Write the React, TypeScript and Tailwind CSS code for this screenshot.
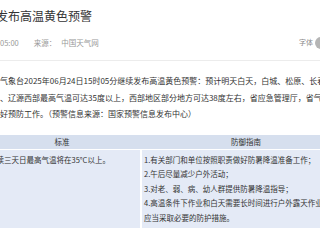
const lines = [
  '气象台2025年06月24日15时05分继续发布高温黄色预警：预计明天白天，白城、松原、长春、四平',
  '、辽源西部最高气温可达35度以上，西部地区部分地方可达38度左右，省应急管理厅，省气象局',
  '好预防工作。（预警信息来源：国家预警信息发布中心）',
];

const guide = [
  '1.有关部门和单位按照职责做好防暑降温准备工作；',
  '2.午后尽量减少户外活动；',
  '3.对老、弱、病、幼人群提供防暑降温指导；',
  '4.高温条件下作业和白天需要长时间进行户外露天作业的人员',
  '应当采取必要的防护措施。',
];

export default function App() {
  return (
    <div className="w-[320px] h-[240px] overflow-hidden bg-white font-['Noto_Sans_CJK_SC','Noto_Sans',sans-serif] text-[#333]">
      {/* Title */}
      <div className="pt-[7px] -ml-[4px] h-[25px] text-[12px] leading-[18px] whitespace-nowrap">发布高温黄色预警</div>

      {/* Meta */}
      <div className="flex items-center justify-between h-[36px] border-b border-[#ececec]">
        <div className="flex items-center text-[7.5px] text-[#999] whitespace-nowrap">
          <span>05:00</span>
          <span className="ml-[15px]">来源：</span>
          <span className="ml-[5px]">中国天气网</span>
        </div>
        <div className="flex items-center gap-[2px] -mr-[7px] text-[7px] text-[#888]">
          <span>字体</span>
          <span className="w-[12px] h-[12px] rounded-full bg-[#b5b5b5]" />
        </div>
      </div>

      {/* Body text */}
      <div className="mt-[12px] text-[8px] leading-[16.5px] whitespace-nowrap">
        {lines.map((l) => (
          <div key={l}>{l}</div>
        ))}
      </div>

      {/* Table */}
      <div className="mt-[12px] -ml-[16px] w-[370px] grid grid-cols-[156px_1fr] gap-x-[2px] gap-y-[1px] text-[7.5px] whitespace-nowrap">
        <div className="h-[14px] leading-[14px] bg-[#d6dfee] text-center">标准</div>
        <div className="h-[14px] leading-[14px] bg-[#d6dfee] text-center -ml-[4px]">防御指南</div>
        <div className="bg-[#e4eaf6] pt-[3px] pb-[3px] pl-[5px] leading-[14.5px]">连续三天日最高气温将在35°C以上。</div>
        <div className="bg-[#e4eaf6] pt-[3px] pb-[3px] pl-[2px] leading-[14.5px]">
          {guide.map((g) => (
            <div key={g}>{g}</div>
          ))}
        </div>
      </div>
    </div>
  );
}
